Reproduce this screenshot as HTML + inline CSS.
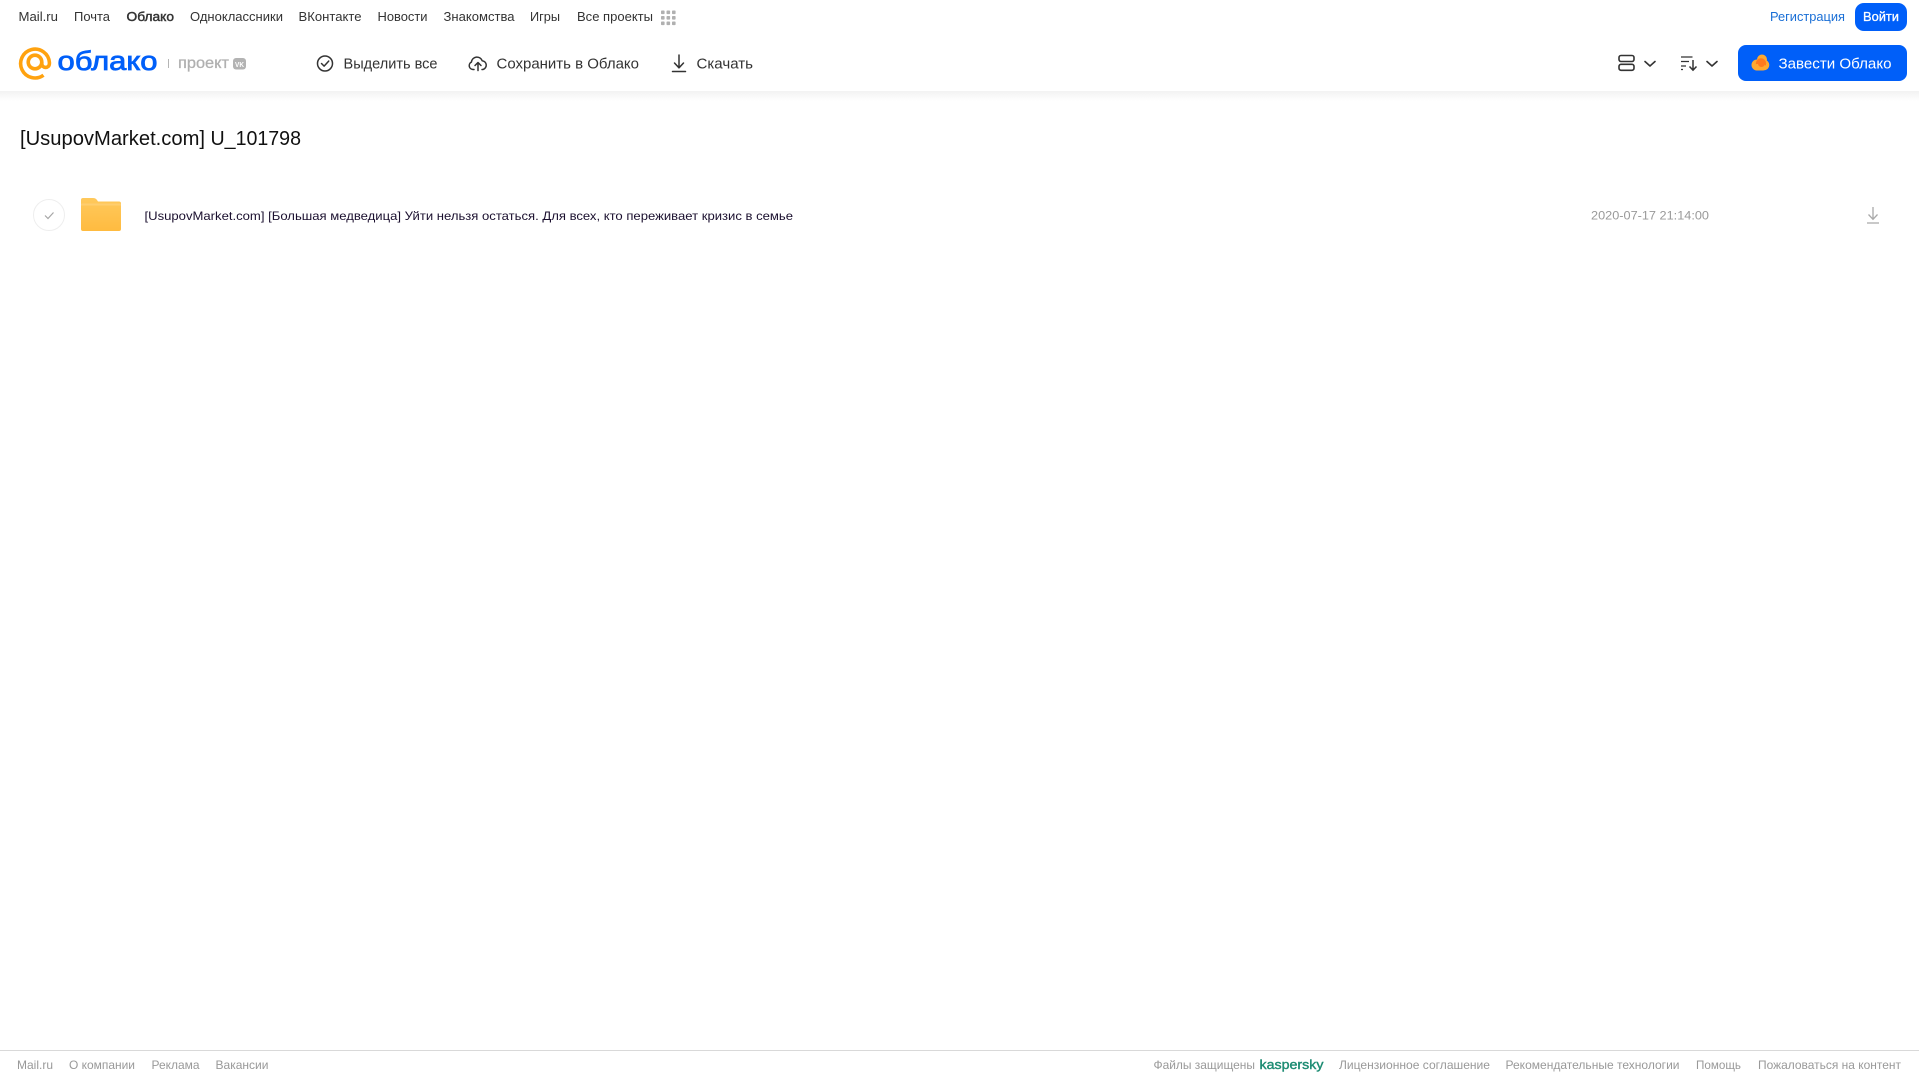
<!DOCTYPE html>
<html lang="ru">
<head>
<meta charset="utf-8">
<title>[UsupovMarket.com] U_101798</title>
<style>
html,body{margin:0;padding:0;background:#fff;width:1919px;height:1079px;overflow:hidden}
svg{display:block;position:absolute;left:0;top:0}
text{font-family:"Liberation Sans",Arial,sans-serif}
.n{font-size:13px;fill:#333}
.a{font-size:15px;fill:#333}
.f{font-size:12px;fill:#999}
</style>
</head>
<body>
<svg width="1919" height="1079" viewBox="0 0 1919 1079" xmlns="http://www.w3.org/2000/svg">
<defs>
<linearGradient id="sh" x1="0" y1="0" x2="0" y2="1"><stop offset="0" stop-color="#f2f2f2"/><stop offset="1" stop-color="#fff"/></linearGradient>
<linearGradient id="fo" x1="0" y1="0" x2="0" y2="1"><stop offset="0" stop-color="#ffc95c"/><stop offset="1" stop-color="#ffbb40"/></linearGradient>
</defs>
<rect width="1919" height="1079" fill="#fff"/>
<rect x="0" y="91" width="1919" height="10" fill="url(#sh)"/>

<!-- top nav -->
<text class="n" x="18.5" y="21" textLength="39.5" lengthAdjust="spacingAndGlyphs">Mail.ru</text>
<text class="n" x="74" y="21" textLength="36" lengthAdjust="spacingAndGlyphs">Почта</text>
<text class="n" x="126.5" y="21" textLength="47.5" lengthAdjust="spacingAndGlyphs" stroke="#333" stroke-width=".45">Облако</text>
<text class="n" x="190" y="21" textLength="93" lengthAdjust="spacingAndGlyphs">Одноклассники</text>
<text class="n" x="298.5" y="21" textLength="63" lengthAdjust="spacingAndGlyphs">ВКонтакте</text>
<text class="n" x="377.5" y="21" textLength="50" lengthAdjust="spacingAndGlyphs">Новости</text>
<text class="n" x="443.5" y="21" textLength="71" lengthAdjust="spacingAndGlyphs">Знакомства</text>
<text class="n" x="530" y="21" textLength="30" lengthAdjust="spacingAndGlyphs">Игры</text>
<text class="n" x="577" y="21" textLength="76" lengthAdjust="spacingAndGlyphs">Все проекты</text>
<g fill="#b0b0b0">
<rect x="661" y="10.5" width="3.6" height="3.6" rx=".8"/><rect x="666.5" y="10.5" width="3.6" height="3.6" rx=".8"/><rect x="672" y="10.5" width="3.6" height="3.6" rx=".8"/>
<rect x="661" y="16" width="3.6" height="3.6" rx=".8"/><rect x="666.5" y="16" width="3.6" height="3.6" rx=".8"/><rect x="672" y="16" width="3.6" height="3.6" rx=".8"/>
<rect x="661" y="21.5" width="3.6" height="3.6" rx=".8"/><rect x="666.5" y="21.5" width="3.6" height="3.6" rx=".8"/><rect x="672" y="21.5" width="3.6" height="3.6" rx=".8"/>
</g>
<text class="n" x="1770" y="21" textLength="75" lengthAdjust="spacingAndGlyphs" style="fill:#1a6fd6">Регистрация</text>
<rect x="1855" y="3" width="52" height="28" rx="9" fill="#005ff9"/>
<text class="n" x="1863" y="21" textLength="36" lengthAdjust="spacingAndGlyphs" stroke="#fff" stroke-width=".3" style="fill:#fff">Войти</text>

<!-- logo -->
<g fill="none" stroke="#ffa20f" stroke-width="3.6">
<circle cx="35" cy="62" r="6.8"/>
<path d="M43.5 75.2A14.4 14.4 0 1 1 49.4 62.5V63.5C49.4 68.6 41.8 68.8 41.8 63.5V62"/>
</g>
<text x="57.5" y="70" font-size="27" fill="#005ff9" stroke="#005ff9" stroke-width=".8" textLength="100" lengthAdjust="spacingAndGlyphs">облако</text>
<rect x="168" y="59" width="1" height="9" fill="#b5b5b5"/>
<text x="178" y="68" font-size="16" fill="#b0b0b0" stroke="#b0b0b0" stroke-width=".3" textLength="51" lengthAdjust="spacingAndGlyphs">проект</text>
<rect x="233" y="58" width="13" height="11.5" rx="3" fill="#b3b3b3"/>
<text x="235" y="67" font-size="7.5" font-weight="700" fill="#fff" textLength="9" lengthAdjust="spacingAndGlyphs">VK</text>

<!-- actions -->
<g fill="none" stroke="#333" stroke-width="1.5" stroke-linecap="round" stroke-linejoin="round">
<circle cx="325" cy="63.5" r="7.5"/>
<path d="M321.5 63.5l2.6 2.6 4.6-5"/>
<path d="M474 69.5h-1a3.9 3.9 0 0 1-1.6-7.4 5.6 5.6 0 0 1 10.8-1.4 4.5 4.5 0 0 1 .8 8.8h-1"/>
<path d="M478 70.5v-7.5M475 65.5l3-3 3 3"/>
<path d="M679 55v12.5M674.5 63l4.5 4.8 4.5-4.8M672.5 71.5h13"/>
</g>
<text class="a" x="343.5" y="68.5" textLength="94" lengthAdjust="spacingAndGlyphs">Выделить все</text>
<text class="a" x="496.5" y="68.5" textLength="142.5" lengthAdjust="spacingAndGlyphs">Сохранить в Облако</text>
<text class="a" x="696.5" y="68.5" textLength="56.5" lengthAdjust="spacingAndGlyphs">Скачать</text>

<!-- right controls -->
<g fill="none" stroke="#333" stroke-width="1.6" stroke-linecap="round" stroke-linejoin="round">
<rect x="1619" y="55.5" width="15" height="6" rx="2"/>
<rect x="1619" y="64.3" width="15" height="6" rx="2"/>
<path d="M1645 61.5l5 4.5 5-4.5M1707 61.5l5 4.5 5-4.5"/>
</g>
<g fill="none" stroke="#333" stroke-width="1.2">
<path d="M1681 57h11.5M1681 61.5h8M1681 66h5M1681 69.5h2"/>
<path d="M1693 60v10M1689.5 66.5l3.5 3.7 3.5-3.7" stroke-width="1.5"/>
</g>
<rect x="1738" y="45" width="169" height="36" rx="8" fill="#005ff9"/>
<g>
<circle cx="1757" cy="65" r="5.5" fill="#ffa930"/>
<circle cx="1762" cy="59.5" r="5" fill="#ffa930"/>
<circle cx="1764" cy="65" r="5.3" fill="#ffa930"/>
<circle cx="1761" cy="63.5" r="5.2" fill="#ff7a1f"/>
<rect x="1754" y="64" width="12" height="6.5" rx="3" fill="#ffa930"/>
<rect x="1758" y="60" width="7" height="7" rx="3.5" fill="#ff7a1f"/>
</g>
<text class="a" x="1778.5" y="68.5" textLength="113" lengthAdjust="spacingAndGlyphs" style="fill:#fff">Завести Облако</text>

<!-- title -->
<text x="20" y="145" font-size="20" fill="#111" textLength="185" lengthAdjust="spacingAndGlyphs">[UsupovMarket.com]</text>
<text x="210.5" y="145" font-size="20" fill="#111" textLength="90.5" lengthAdjust="spacingAndGlyphs">U_101798</text>

<!-- row -->
<circle cx="49" cy="215" r="15.5" fill="#fff" stroke="#eeeeee"/>
<path d="M45 215.5l3 3 5.5-6" fill="none" stroke="#a6a6a6" stroke-width="1.2"/>
<path d="M83 198h10c2 0 3 .7 4 2l1 1.5h21a2 2 0 0 1 2 2V229a2 2 0 0 1-2 2H83a2 2 0 0 1-2-2V200a2 2 0 0 1 2-2z" fill="url(#fo)"/>
<path d="M81 204.5a1 1 0 0 1 1-1h38a1 1 0 0 1 1 1v1H81z" fill="#ffd27a" opacity=".7"/>
<text x="144.5" y="220" font-size="12" fill="#1a0f2e" textLength="648.5" lengthAdjust="spacingAndGlyphs">[UsupovMarket.com] [Большая медведица] Уйти нельзя остаться. Для всех, кто переживает кризис в семье</text>
<text x="1591" y="219.5" font-size="12" fill="#999" textLength="118" lengthAdjust="spacingAndGlyphs">2020-07-17 21:14:00</text>
<g fill="none" stroke="#a9a9a9" stroke-width="1.3"><path d="M1873 207v12M1868.5 214.5l4.5 4.8 4.5-4.8M1867 223h12"/></g>

<!-- footer -->
<rect x="0" y="1050" width="1919" height="1" fill="#d9d9d9"/>
<text class="f" x="17" y="1069" textLength="36" lengthAdjust="spacingAndGlyphs">Mail.ru</text>
<text class="f" x="69" y="1069" textLength="66" lengthAdjust="spacingAndGlyphs">О компании</text>
<text class="f" x="151.5" y="1069" textLength="48" lengthAdjust="spacingAndGlyphs">Реклама</text>
<text class="f" x="215.5" y="1069" textLength="53" lengthAdjust="spacingAndGlyphs">Вакансии</text>
<text class="f" x="1153.5" y="1069" textLength="101.5" lengthAdjust="spacingAndGlyphs">Файлы защищены</text>
<text x="1259.5" y="1069" font-size="13" fill="#1d8c73" stroke="#1d8c73" stroke-width=".4" textLength="64" lengthAdjust="spacingAndGlyphs">kaspersky</text>
<text class="f" x="1339" y="1069" textLength="151" lengthAdjust="spacingAndGlyphs">Лицензионное соглашение</text>
<text class="f" x="1505.5" y="1069" textLength="174" lengthAdjust="spacingAndGlyphs">Рекомендательные технологии</text>
<text class="f" x="1696" y="1069" textLength="45" lengthAdjust="spacingAndGlyphs">Помощь</text>
<text class="f" x="1758" y="1069" textLength="143" lengthAdjust="spacingAndGlyphs">Пожаловаться на контент</text>
</svg>
</body>
</html>
